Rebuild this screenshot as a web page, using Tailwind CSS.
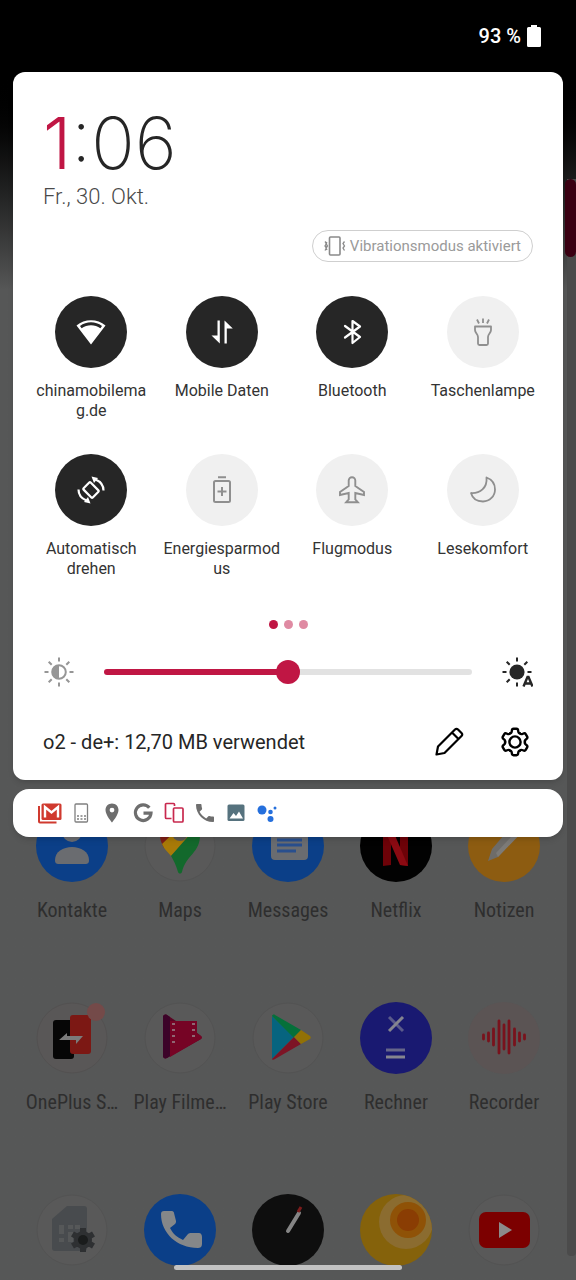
<!DOCTYPE html>
<html lang="de">
<head>
    <meta charset="UTF-8">
    <meta name="viewport" content="width=device-width, initial-scale=1.0">
    <title>Schnelleinstellungen</title>
    <script src="https://cdn.jsdelivr.net/npm/@tailwindcss/browser@4"></script>
</head>
<body class="relative h-screen overflow-hidden bg-[#555756] font-[Roboto,sans-serif]">

    <!-- App drawer behind the shade -->
    <main class="absolute inset-0 overflow-hidden bg-linear-to-b from-black from-[72px] to-[#565757] to-[290px] pt-[810px]">
        <div class="grid grid-cols-5 gap-y-20 px-[18px] text-[20px] leading-6 text-[#2e2e2e] font-['Roboto_Condensed','Liberation_Sans_Narrow',Roboto,sans-serif]">
            <a href="#" class="flex flex-col items-center gap-4">
                <svg class="size-[72px]" viewBox="0 0 72 72">
                    <circle cx="36" cy="36" r="36" fill="#0b3f88"/>
                    <circle cx="36" cy="22" r="10" fill="#6a6c70"/>
                    <path d="M19 50c0-8 8-13 17-13s17 5 17 13c0 3-1 4-4 4H23c-3 0-4-1-4-4z" fill="#6a6c70"/>
                </svg>
                <span>Kontakte</span>
            </a>
            <a href="#" class="flex flex-col items-center gap-4">
                <svg class="size-[72px]" viewBox="0 0 72 72">
                    <circle cx="36" cy="36" r="35" fill="#595959" stroke="#535353"/>
                    <path d="M16 26c0 4 2 8 4 12l32-30c-10-8-36-4-36 18z" fill="#7e1e17"/>
                    <path d="M18 34c2 5 6 8 9 12l28-30-8-10z" fill="#a87a08"/>
                    <path d="M56 25c0 18-14 20-18 37-1 2-3 2-4 0-2-7-4-11-7-16l27-31c1 3 2 6 2 10z" fill="#13692c"/>
                    <circle cx="36" cy="23" r="8" fill="#595959"/>
                </svg>
                <span>Maps</span>
            </a>
            <a href="#" class="flex flex-col items-center gap-4">
                <svg class="size-[72px]" viewBox="0 0 72 72">
                    <circle cx="36" cy="36" r="36" fill="#0b3f88"/>
                    <rect x="19" y="16" width="37" height="34" rx="4" fill="#6a6c70"/>
                    <path d="M25 30h25M25 35h25M25 41h19" stroke="#294f8e" stroke-width="3"/>
                </svg>
                <span>Messages</span>
            </a>
            <a href="#" class="flex flex-col items-center gap-4">
                <svg class="size-[72px]" viewBox="0 0 72 72">
                    <circle cx="36" cy="36" r="36" fill="#020202"/>
                    <path d="M23 16h8v39l-8 1zM40 16h8v40l-8-1z" fill="#6d0208"/>
                    <path d="M23 16h8l17 40-8-1z" fill="#8b0a12"/>
                </svg>
                <span>Netflix</span>
            </a>
            <a href="#" class="flex flex-col items-center gap-4">
                <svg class="size-[72px]" viewBox="0 0 72 72">
                    <circle cx="36" cy="36" r="36" fill="#8d5c11"/>
                    <path d="M20 51l4-12 24-28 10 6-28 30z" fill="#6e6c69"/>
                    <path d="M28 43l28-30 3 4-29 30z" fill="#7d7b78"/>
                </svg>
                <span>Notizen</span>
            </a>
            <a href="#" class="flex flex-col items-center gap-4">
                <svg class="size-[72px]" viewBox="0 0 72 72">
                    <circle cx="36" cy="36" r="35" fill="#595757" stroke="#535151"/>
                    <rect x="17" y="18" width="21" height="39" rx="3" fill="#060606"/>
                    <rect x="34" y="13" width="21" height="39" rx="3" fill="#7c1814"/>
                    <path d="M23 38l8-7v3h16l-7 8v-4z" fill="#7b7b7b"/>
                    <circle cx="60" cy="10" r="9" fill="#744a49"/>
                </svg>
                <span>OnePlus S…</span>
            </a>
            <a href="#" class="flex flex-col items-center gap-4">
                <svg class="size-[72px]" viewBox="0 0 72 72">
                    <circle cx="36" cy="36" r="35" fill="#595959" stroke="#535353"/>
                    <path d="M19 15c0-2 2-3 4-2l9 6h21v12l4 3c1 1 1 2 0 3L23 56c-2 1-4 0-4-2z" fill="#5a0423"/>
                    <path d="M26 19h27v12l4 3c1 1 1 2 0 3L26 55z" fill="#760425"/>
                    <path d="M19 15c0-2 2-3 4-2l3 2v39l-3 2c-2 1-4 0-4-2z" fill="#3c0429"/>
                    <path d="M29.500 21v23M49.500 21v18" stroke="#8f6672" stroke-width="3" stroke-dasharray="2 4"/>
                </svg>
                <span>Play Filme…</span>
            </a>
            <a href="#" class="flex flex-col items-center gap-4">
                <svg class="size-[72px]" viewBox="0 0 72 72">
                    <circle cx="36" cy="36" r="35" fill="#595959" stroke="#535353"/>
                    <path d="M20 14v43l22-22z" fill="#06647f"/>
                    <path d="M20 14c0-1 2-2 3-1l26 15-7 8z" fill="#05703a"/>
                    <path d="M20 57c0 1 2 1 3 0l26-15-7-7z" fill="#7d1425"/>
                    <path d="M49 28l9 6c1 1 1 2 0 3l-9 5-7-7z" fill="#927106"/>
                </svg>
                <span>Play Store</span>
            </a>
            <a href="#" class="flex flex-col items-center gap-4">
                <svg class="size-[72px]" viewBox="0 0 72 72">
                    <circle cx="36" cy="36" r="36" fill="#191971"/>
                    <path d="M29 15l14 14" stroke="#5a5a8a" stroke-width="3"/>
                    <path d="M43 15L29 29" stroke="#85858f" stroke-width="3"/>
                    <path d="M26 48h19" stroke="#66668a" stroke-width="3"/>
                    <path d="M26 55h19" stroke="#85858f" stroke-width="3"/>
                </svg>
                <span>Rechner</span>
            </a>
            <a href="#" class="flex flex-col items-center gap-4">
                <svg class="size-[72px]" viewBox="0 0 72 72">
                    <circle cx="36" cy="36" r="36" fill="#5b5454"/>
                    <path d="M15.500 33v4M20.500 31v8M25.500 27v16M31 19v32M36 23v24M41 19v32M46.500 27v16M51.500 31v8M56.500 33v4" stroke="#79121c" stroke-width="2.800" stroke-linecap="round"/>
                </svg>
                <span>Recorder</span>
            </a>
            <a href="#" aria-label="SIM-Toolkit">
                <svg class="mx-auto size-[72px]" viewBox="0 0 72 72">
                    <circle cx="36" cy="36" r="35" fill="#595959" stroke="#535353"/>
                    <path d="M19 57h29c2 0 3-1 3-3V15c0-2-1-3-3-3H31L16 25v29c0 2 1 3 3 3z" fill="#484b4e"/>
                    <path d="M23 31h5v9h-5zM32 31h5v4h-5zM39 31h5v4h-5zM32 38h5v10h-5zM23 44h5v4h-5z" fill="#565859"/>
                    <circle cx="47" cy="46" r="9" fill="#2e3032"/>
                    <path d="M47 34v24M36.500 40l21 12M57.500 40l-21 12" stroke="#2e3032" stroke-width="6"/>
                    <circle cx="47" cy="46" r="5" fill="#1a1c1c"/>
                </svg>
            </a>
            <a href="#" aria-label="Telefon">
                <svg class="mx-auto size-[72px]" viewBox="0 0 72 72">
                    <circle cx="36" cy="36" r="36" fill="#0b3f88"/>
                    <path d="M17 20c0-2 1-3 3-3h8c1 0 2 1 2 2l2 8c0 1 0 2-1 3l-5 4c3 6 7 9 13 12l5-6c1-1 2-1 3-1h8c2 0 3 2 3 4v7c0 3-2 4-4 4-21 0-37-15-37-34z" fill="#858789"/>
                </svg>
            </a>
            <a href="#" aria-label="Uhr">
                <svg class="mx-auto size-[72px]" viewBox="0 0 72 72">
                    <circle cx="36" cy="36" r="36" fill="#0e0e0e"/>
                    <path d="M36 37l11-18" stroke="#858585" stroke-width="4" stroke-linecap="round"/>
                    <path d="M46 18l3-5" stroke="#7c1c1c" stroke-width="3"/>
                </svg>
            </a>
            <a href="#" aria-label="Wetter">
                <svg class="mx-auto size-[72px]" viewBox="0 0 72 72">
                    <clipPath id="sun"><circle cx="36" cy="36" r="36"/></clipPath>
                    <g clip-path="url(#sun)">
                        <rect width="72" height="72" fill="#85620b"/>
                        <circle cx="46" cy="28" r="27" fill="#8b6c30"/>
                        <circle cx="48" cy="26" r="18" fill="#8f5207"/>
                        <circle cx="48" cy="26" r="11" fill="#8a3d03"/>
                    </g>
                </svg>
            </a>
            <a href="#" aria-label="YouTube">
                <svg class="mx-auto size-[72px]" viewBox="0 0 72 72">
                    <circle cx="36" cy="36" r="35" fill="#595959" stroke="#535353"/>
                    <rect x="11" y="18" width="51" height="36" rx="7" fill="#7c0000"/>
                    <path d="M31 28l13 8-13 8z" fill="#8c8c8c"/>
                </svg>
            </a>
        </div>

        <!-- Fast scroll rail -->
        <div class="absolute right-0 top-[179px] h-[1077px] w-[9px] rounded-b bg-[#4b4b4b]"></div>
        <div class="absolute right-0 top-[179px] h-[78px] w-[11px] rounded-md bg-[#3a0012]"></div>
    </main>

    <!-- Notification shade -->
    <div class="relative px-[13px]">
        <header class="flex h-[72px] items-center justify-end gap-[6px] pr-[22px] text-xl font-medium text-white">
            <span>93 %</span>
            <svg class="h-[22px] w-[14px]" viewBox="0 0 14 22" fill="#fff"><path d="M4 0h6v2h2.500A1.500 1.500 0 0 1 14 3.500v17a1.500 1.500 0 0 1-1.500 1.500h-11A1.500 1.500 0 0 1 0 20.500v-17A1.500 1.500 0 0 1 1.500 2H4z"/></svg>
        </header>

        <section class="rounded-xl bg-white shadow-md">
            <div class="px-[30px] pt-[34px]">
                <h1 class="font-[Inter,sans-serif] text-[72px] font-extralight leading-[74px] text-[#262626]"><span class="font-light text-[#c01644]">1</span>:06</h1>
                <p class="pt-[2px] text-[22px] font-light leading-[30px] text-[#4a4a4a]">Fr., 30. Okt.</p>
                <div class="flex justify-end pt-[18px]">
                    <button class="flex h-8 items-center gap-1 rounded-full border border-[#cfcfcf] px-[11px] text-[15px] text-[#9a9a9a]">
                        <svg class="h-5 w-[22px]" viewBox="0 0 22 20" fill="none" stroke="#8a8a8a">
                            <rect x="5.500" y="1" width="10.500" height="18" rx="1" stroke-width="1.600"/>
                            <path d="M1 5.500l1.500 2L1 10l1.500 2L1 14.500M3 6l-1 1.500 1.500 2.500L2 12l1 2M20.500 5.500l-1.500 2 1.500 2.500-1.500 2 1.500 2.500" stroke-width="1.300"/>
                        </svg>
                        Vibrationsmodus aktiviert
                    </button>
                </div>
            </div>

            <!-- Tiles -->
            <div class="grid grid-cols-4 gap-y-[33px] pl-[13px] pr-[15px] pt-[34px] text-base leading-5 text-[#333]">
                <button class="flex flex-col items-center gap-[13px]">
                    <span class="flex size-[72px] items-center justify-center rounded-full bg-[#262626]">
                        <svg class="size-8" viewBox="0 0 32 32" fill="#fff"><path d="M16 28.500L1.500 9.500C9.500 2.500 22.500 2.500 30.500 9.500zM5 10l1.600 2.300c5.400-4 13.400-4 18.800 0L27 10C20.500 5 11.500 5 5 10z" fill-rule="evenodd"/></svg>
                    </span>
                    <span class="w-[118px]">chinamobilema<wbr>g.de</span>
                </button>
                <button class="flex flex-col items-center gap-[13px]">
                    <span class="flex size-[72px] items-center justify-center rounded-full bg-[#262626]">
                        <svg class="size-8" viewBox="0 0 32 32" fill="#fff"><path d="M11.500 4.500h2.300v23L5.500 19.500h6zM18.500 27.500h2.300v-15h6l-8.300-8z"/></svg>
                    </span>
                    <span class="h-10">Mobile Daten</span>
                </button>
                <button class="flex flex-col items-center gap-[13px]">
                    <span class="flex size-[72px] items-center justify-center rounded-full bg-[#262626]">
                        <svg class="size-8" viewBox="0 0 32 32" fill="none" stroke="#fff" stroke-width="2.200" stroke-linejoin="round" stroke-linecap="round"><path d="M9 10l15 11-7.500 6V5L24 10.500 9 21.500"/></svg>
                    </span>
                    <span class="h-10">Bluetooth</span>
                </button>
                <button class="flex flex-col items-center gap-[13px]">
                    <span class="flex size-[72px] items-center justify-center rounded-full bg-[#f0f0f0]">
                        <svg class="size-8" viewBox="0 0 32 32" fill="none" stroke="#8f8f8f" stroke-width="1.800" stroke-linejoin="round"><path d="M8 10.500h16v3.500c0 3-3 4-3 7v6.500a1.500 1.500 0 0 1-1.500 1.500h-7a1.500 1.500 0 0 1-1.500-1.500V21c0-3-3-4-3-7zM16 2.500V7M10 3.500l2 4M22 3.500l-2 4"/></svg>
                    </span>
                    <span class="h-10">Taschenlampe</span>
                </button>
                <button class="flex flex-col items-center gap-[13px]">
                    <span class="flex size-[72px] items-center justify-center rounded-full bg-[#262626]">
                        <svg class="size-8" viewBox="0 0 32 32" fill="none" stroke="#fff" stroke-width="2.200">
                            <rect x="11" y="9.500" width="10" height="13" rx="1" transform="rotate(-45 16 16)"/>
                            <path d="M3.500 15.500c0 5 3 9 8 11M28.500 16.500c0-5-3-9-8-11"/>
                            <path d="M15.500 29.500l-6.500-1.500 4-5zM16.500 2.500l6.500 1.500-4 5z" fill="#fff" stroke="none"/>
                        </svg>
                    </span>
                    <span class="w-[118px]">Automatisch drehen</span>
                </button>
                <button class="flex flex-col items-center gap-[13px]">
                    <span class="flex size-[72px] items-center justify-center rounded-full bg-[#f0f0f0]">
                        <svg class="size-8" viewBox="0 0 32 32" fill="none" stroke="#8f8f8f" stroke-width="2"><rect x="8" y="7" width="16" height="21" rx="1.500"/><path d="M12 3.200h8M16 13v9M11.500 17.500h9"/></svg>
                    </span>
                    <span class="w-[118px]">Energiesparmod<wbr>us</span>
                </button>
                <button class="flex flex-col items-center gap-[13px]">
                    <span class="flex size-[72px] items-center justify-center rounded-full bg-[#f0f0f0]">
                        <svg class="size-8" viewBox="0 0 32 32" fill="none" stroke="#8f8f8f" stroke-width="1.900" stroke-linejoin="miter"><path d="M12.700 12V6.500a3.300 3.300 0 0 1 6.600 0V12L28 18v3l-8.700-2v6.500l2.500 2.700H10.200l2.500-2.700V19L4 21v-3z"/></svg>
                    </span>
                    <span class="h-10">Flugmodus</span>
                </button>
                <button class="flex flex-col items-center gap-[13px]">
                    <span class="flex size-[72px] items-center justify-center rounded-full bg-[#f0f0f0]">
                        <svg class="size-8" viewBox="0 0 32 32" fill="none" stroke="#8f8f8f" stroke-width="1.800" stroke-linejoin="round"><path d="M19.500 3.500c5.500 2 8.500 6.500 8.500 12A12 12 0 0 1 16 27.500c-6 0-10.500-3-12-8.500C13 19.500 20.500 14 19.500 3.500z"/></svg>
                    </span>
                    <span class="h-10">Lesekomfort</span>
                </button>
            </div>

            <div class="flex justify-center gap-[6px] pt-[41px]">
                <span class="size-[9px] rounded-full bg-[#c01644]"></span>
                <span class="size-[9px] rounded-full bg-[#df8aa2]"></span>
                <span class="size-[9px] rounded-full bg-[#df8aa2]"></span>
            </div>

            <!-- Brightness -->
            <div class="flex items-center px-[30px] pt-[27px]">
                <svg class="size-8 shrink-0" viewBox="0 0 32 32" fill="none" stroke="#969696" stroke-width="2">
                    <circle cx="16" cy="16" r="6.800"/>
                    <path d="M16 9a7 7 0 0 0 0 14z" fill="#969696" stroke="none"/>
                    <path d="M16 1.500v4M16 26.500v4M1.500 16h4M26.500 16h4M5.700 5.700l3 3M23.300 23.300l3 3M5.700 26.300l3-3M23.300 8.700l3-3"/>
                </svg>
                <input type="range" min="0" max="100" value="50" aria-label="Helligkeit" class="mx-[29px] h-[6px] min-w-0 flex-1 appearance-none rounded-full bg-[linear-gradient(to_right,#c01644_50%,#e2e2e2_50%)] [&::-webkit-slider-thumb]:size-6 [&::-webkit-slider-thumb]:appearance-none [&::-webkit-slider-thumb]:rounded-full [&::-webkit-slider-thumb]:bg-[#c01644]">
                <button aria-label="Automatische Helligkeit" class="shrink-0">
                    <svg class="size-8" viewBox="0 0 32 32" fill="none" stroke="#262626" stroke-width="2">
                        <circle cx="16" cy="16" r="7.600" fill="#262626" stroke="none"/>
                        <path d="M16 1.500v4M16 26.500v4M1.500 16h4M26.500 16h4M5.700 5.700l3 3M5.700 26.300l3-3M23.300 8.700l3-3"/>
                        <path d="M22.500 30.500l4-9.500h1l4 9.500M24 27.500h6" stroke-width="2.400"/>
                    </svg>
                </button>
            </div>

            <div class="flex items-center pb-[22px] pl-[30px] pr-8 pt-[38px]">
                <p class="flex-1 text-xl leading-8 text-[#262626]">o2 - de+: 12,70 MB verwendet</p>
                <button aria-label="Bearbeiten">
                    <svg class="size-8" viewBox="0 0 32 32" fill="none" stroke="#000" stroke-width="2.200" stroke-linejoin="round"><path d="M3.500 28.500l1.500-8L22 3.500c1-1 2-1 3 0l3.500 3.500c1 1 1 2 0 3L11.500 27zM19 6.500l6.500 6.500"/></svg>
                </button>
                <button aria-label="Einstellungen" class="ml-[34px]">
                    <svg class="size-8" viewBox="0 0 32 32" fill="none" stroke="#000" stroke-width="2.400" stroke-linecap="round">
                        <circle cx="16" cy="16" r="5.600"/>
                        <g id="tooth"><path d="M11 7.400Q12.600 7.200 12.800 5Q13 2.800 14.500 2.800H17.500Q19 2.800 19.200 5Q19.400 7.200 21 7.400"/></g>
                        <use href="#tooth" transform="rotate(60 16 16)"/>
                        <use href="#tooth" transform="rotate(120 16 16)"/>
                        <use href="#tooth" transform="rotate(180 16 16)"/>
                        <use href="#tooth" transform="rotate(240 16 16)"/>
                        <use href="#tooth" transform="rotate(300 16 16)"/>
                    </svg>
                </button>
            </div>
        </section>

        <!-- Collapsed notifications -->
        <section class="mt-[9px] flex h-12 items-center gap-[7px] rounded-2xl bg-white pl-[25px] shadow-md">
            <svg class="size-6" viewBox="0 0 24 24"><path d="M1 5v15.500a1 1 0 0 0 1 1h16.500" fill="none" stroke="#d03a2f" stroke-width="2"/><rect x="3.500" y="2.500" width="20" height="16.500" rx="1.500" fill="#d03a2f"/><path d="M7 16.500V6l6.500 5.500L20 6v10.500" fill="none" stroke="#fff" stroke-width="2.400"/></svg>
            <svg class="size-6" viewBox="0 0 24 24" fill="none" stroke="#808080"><rect x="6" y="3" width="12.500" height="18" rx="1" stroke-width="1.300"/><path d="M8 15h9M8 18h9" stroke-width="1.600" stroke-dasharray="2 1.500"/></svg>
            <svg class="size-6" viewBox="0 0 24 24" fill="#6e6e6e"><path d="M12 2.500c-3.700 0-6.500 2.800-6.500 6.500 0 5 6.500 12.500 6.500 12.500S18.500 14 18.500 9c0-3.700-2.800-6.500-6.500-6.500zm0 9a2.400 2.400 0 1 1 0-4.800 2.400 2.400 0 0 1 0 4.800z"/></svg>
            <svg class="size-6" viewBox="0 0 24 24" fill="none" stroke="#6e6e6e" stroke-width="3.200"><path d="M18.300 6.800A7.800 7.800 0 1 0 20 12.200h-7.500"/></svg>
            <svg class="size-6" viewBox="0 0 24 24" fill="none" stroke="#c8284e" stroke-width="1.700"><path d="M9.500 17.500H4.500a1 1 0 0 1-1-1v-13a1 1 0 0 1 1-1h7a1 1 0 0 1 1 1V5"/><rect x="11.500" y="7" width="9.500" height="14" rx="1"/></svg>
            <svg class="size-6" viewBox="0 0 24 24" fill="#6e6e6e"><path d="M6.600 10.800c1.400 2.800 3.800 5.100 6.600 6.600l2.200-2.200c.3-.3.700-.4 1-.2 1.100.4 2.300.6 3.600.6.600 0 1 .4 1 1V20c0 .6-.4 1-1 1C10.600 21 3 13.400 3 4c0-.6.500-1 1-1h3.500c.6 0 1 .4 1 1 0 1.300.2 2.500.6 3.600.1.300 0 .7-.2 1z"/></svg>
            <svg class="size-6" viewBox="0 0 24 24"><rect x="3.500" y="3.500" width="17" height="16.500" rx="1.500" fill="#56727e"/><path d="M5.500 17.500l4-5.500 2.500 3 3-4.500 4 7z" fill="#fff"/></svg>
            <svg class="size-6" viewBox="0 0 24 24" fill="#256fdc"><circle cx="7" cy="9" r="4.500"/><circle cx="15.500" cy="11" r="2.300"/><circle cx="15.500" cy="18" r="3"/><circle cx="20" cy="7" r="1.500"/></svg>
        </section>
    </div>

    <!-- Gesture bar -->
    <div class="absolute bottom-[10px] left-1/2 h-[5px] w-[228px] -translate-x-1/2 rounded-full bg-[#c2c2c2]"></div>

</body>
</html>
